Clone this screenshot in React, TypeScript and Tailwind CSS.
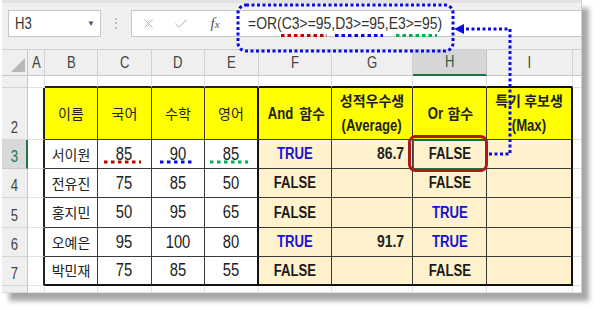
import React from "react";
import { X, Check } from "lucide-react";

const sans = "font-['Liberation_Sans','Noto_Sans_CJK_KR',sans-serif]";
const kr = "font-['Noto_Sans_CJK_KR',sans-serif] text-[14px]";

// Calibri-like narrow look: Arial squeezed sideways
const N = ({ children, className = "" }: { children: React.ReactNode; className?: string }) => (
	<span className={`inline-block scale-x-[0.82] ${className}`}>{children}</span>
);

type Row = { n: number; name: string; k: number; m: number; e: number; and: string; avg: string; or: string };

const rows: Row[] = [
	{ n: 3, name: "서이원", k: 85, m: 90, e: 85, and: "TRUE", avg: "86.7", or: "FALSE" },
	{ n: 4, name: "전유진", k: 75, m: 85, e: 50, and: "FALSE", avg: "", or: "FALSE" },
	{ n: 5, name: "홍지민", k: 50, m: 95, e: 65, and: "FALSE", avg: "", or: "TRUE" },
	{ n: 6, name: "오예은", k: 95, m: 100, e: 80, and: "TRUE", avg: "91.7", or: "TRUE" },
	{ n: 7, name: "박민재", k: 75, m: 85, e: 55, and: "FALSE", avg: "", or: "FALSE" },
];

const letters = ["A", "B", "C", "D", "E", "F", "G", "H", "I"];

const RowHead = ({ n, active }: { n?: number; active?: boolean }) => (
	<div
		className={
			active
				? "flex items-end justify-center pb-[3px] bg-[#d9d9d9] border-r-2 border-r-[#217346] border-b border-b-[#c8c8c8] text-[#217346] text-[16px] leading-none"
				: "flex items-end justify-center pb-[3px] bg-[#efefef] border-r border-r-[#c6c6c6] border-b border-b-[#d6d6d6] text-[#444] text-[16px] leading-none"
		}
	>
		{n && <N>{n}</N>}
	</div>
);

const Gap = () => <div className="bg-white border-r border-b border-[#e1e1e1]" />;

const Bool = ({ v }: { v: string }) => (
	<N className={v === "TRUE" ? "font-bold text-[16px] text-[#1414d2]" : "font-bold text-[16px] text-[#1a1a1a]"}>{v}</N>
);

const DataRow = ({ r, last }: { r: Row; last: boolean }) => {
	const b = last ? "border-b-2 border-b-[#111]" : "border-b border-b-[#3a3a3a]";
	return (
		<>
			<RowHead n={r.n} active={r.n === 3} />
			<div className="bg-white border-r-2 border-r-[#222] border-b border-b-[#e1e1e1]" />
			<div className={`${b} border-r border-r-[#3a3a3a] bg-white flex items-center justify-center`}>
				<span className={kr}>{r.name}</span>
			</div>
			<div className={`${b} border-r border-r-[#3a3a3a] bg-white flex items-center justify-center text-[18px]`}>
				<N>{r.k}</N>
			</div>
			<div className={`${b} border-r border-r-[#3a3a3a] bg-white flex items-center justify-center text-[18px]`}>
				<N>{r.m}</N>
			</div>
			<div className={`${b} border-r-2 border-r-[#111] bg-white flex items-center justify-center text-[18px]`}>
				<N>{r.e}</N>
			</div>
			<div className={`${b} border-r border-r-[#3a3a3a] bg-[#fff2cc] flex items-center justify-center`}>
				<Bool v={r.and} />
			</div>
			<div className={`${b} border-r border-r-[#3a3a3a] bg-[#fff2cc] flex items-center justify-end pr-[8px] font-bold text-[17px]`}>
				{r.avg && <N className="origin-right">{r.avg}</N>}
			</div>
			<div className={`${b} border-r border-r-[#3a3a3a] bg-[#fff2cc] flex items-center justify-center`}>
				<Bool v={r.or} />
			</div>
			<div className={`${b} border-r-2 border-r-[#111] bg-[#fff2cc]`} />
			<Gap />
		</>
	);
};

const App = () => {
	return (
		<div className={`relative w-[600px] h-[310px] bg-white text-[#222] ${sans}`}>
			<div className="ml-[2px] w-[580px] h-[293px] bg-[#efefef] border-r border-[#d0d0d0] overflow-hidden shadow-[7px_8px_5px_rgba(0,0,0,0.35)]">
				{/* formula bar */}
				<div className="h-[50px] flex items-start pt-[7px] pl-[6px] border-b border-[#d0d0d0] border-t-[3px] border-t-[#e2e2e2]">
					<div className="w-[93px] h-[27px] bg-white border border-[#c6c6c6] flex items-center justify-between pl-[6px] pr-[5px] text-[16px] text-[#333]">
						<N className="origin-left">H3</N>
						<span className="text-[8px] text-[#555]">▼</span>
					</div>
					<div className="w-[30px] h-[27px] flex items-center justify-center text-[#b4b4b4] text-[14px]">⋮</div>
					<div className="flex-1 h-[27px] bg-white border-y border-l border-[#c6c6c6] flex items-center">
						<div className="w-[32px] flex justify-center">
							<X size={15} strokeWidth={1.4} color="#a8a8a8" />
						</div>
						<div className="w-[34px] flex justify-center">
							<Check size={16} strokeWidth={1.4} color="#a8a8a8" />
						</div>
						<div className="w-[34px] flex justify-center">
							<i className="font-['Liberation_Serif',serif] text-[15px] text-[#555]">
								f<span className="text-[11px]">x</span>
							</i>
						</div>
						<span className="pl-[16px] text-[17px] text-[#333] whitespace-nowrap">
							<N className="origin-left">=OR(C3&gt;=95,D3&gt;=95,E3&gt;=95)</N>
						</span>
					</div>
				</div>

				{/* sheet */}
				<div className="grid grid-cols-[26px_17px_53px_54px_53px_54px_73px_81px_74px_86px_9px] grid-rows-[26px_12px_52px_29px_29px_30px_29px_29px_7px] bg-white">
					<div className="relative bg-[#efefef] border-r border-b border-[#c6c6c6]">
						<svg className="absolute inset-0" width="26" height="26">
							<polygon points="23,8 23,22 9,22" fill="#b9b9b9" />
						</svg>
					</div>
					{letters.map((l) => (
						<div
							key={l}
							className={
								l === "H"
									? "flex items-center justify-center bg-[#d6d6d6] border-r border-r-[#c6c6c6] border-b-2 border-b-[#217346] text-[#2a5d45] text-[16px]"
									: "flex items-center justify-center bg-[#efefef] border-r border-r-[#d2d2d2] border-b border-b-[#c6c6c6] text-[#444] text-[16px]"
							}
						>
							<N>{l}</N>
						</div>
					))}
					<div className="bg-[#efefef] border-b border-[#c6c6c6]" />

					{/* row 1 */}
					<RowHead />
					<Gap />
					<div className="bg-white border-r border-r-[#e1e1e1] border-b-2 border-b-[#222]" />
					<div className="bg-white border-r border-r-[#e1e1e1] border-b-2 border-b-[#222]" />
					<div className="bg-white border-r border-r-[#e1e1e1] border-b-2 border-b-[#222]" />
					<div className="bg-white border-r border-r-[#e1e1e1] border-b-2 border-b-[#222]" />
					<div className="bg-white border-r border-r-[#e1e1e1] border-b-2 border-b-[#111]" />
					<div className="bg-white border-r border-r-[#e1e1e1] border-b-2 border-b-[#111]" />
					<div className="bg-white border-r border-r-[#e1e1e1] border-b-2 border-b-[#111]" />
					<div className="bg-white border-r border-r-[#e1e1e1] border-b-2 border-b-[#111]" />
					<Gap />

					{/* row 2 */}
					<RowHead n={2} />
					<div className="bg-white border-r-2 border-r-[#222] border-b border-b-[#e1e1e1]" />
					<div className="bg-[#ffff00] border-r border-b border-[#3a3a3a] flex items-center justify-center">
						<span className={kr}>이름</span>
					</div>
					<div className="bg-[#ffff00] border-r border-b border-[#3a3a3a] flex items-center justify-center">
						<span className={kr}>국어</span>
					</div>
					<div className="bg-[#ffff00] border-r border-b border-[#3a3a3a] flex items-center justify-center">
						<span className={kr}>수학</span>
					</div>
					<div className="bg-[#ffff00] border-r-2 border-r-[#111] border-b border-b-[#3a3a3a] flex items-center justify-center">
						<span className={kr}>영어</span>
					</div>
					<div className="bg-[#ffff00] border-r border-b border-[#3a3a3a] flex items-center justify-center font-bold text-[16px] gap-[3px]">
						<N>And</N>
						<span className={`${kr} font-bold`}>함수</span>
					</div>
					<div className="bg-[#ffff00] border-r border-b border-[#3a3a3a] flex flex-col items-center justify-center font-bold leading-[26px] pb-[2px]">
						<span className={`${kr} font-bold`}>성적우수생</span>
						<N className="text-[16px]">(Average)</N>
					</div>
					<div className="bg-[#ffff00] border-r border-b border-[#3a3a3a] flex items-center justify-center font-bold text-[16px] gap-[3px]">
						<N>Or</N>
						<span className={`${kr} font-bold`}>함수</span>
					</div>
					<div className="bg-[#ffff00] border-r-2 border-r-[#111] border-b border-b-[#3a3a3a] flex flex-col items-center justify-center font-bold leading-[26px] pb-[2px]">
						<span className={`${kr} font-bold`}>특기 후보생</span>
						<N className="text-[16px]">(Max)</N>
					</div>
					<Gap />

					{rows.map((r, i) => (
						<DataRow key={r.n} r={r} last={i === rows.length - 1} />
					))}

					{/* row 8 */}
					<RowHead />
					{Array.from({ length: 10 }).map((_, i) => (
						<Gap key={i} />
					))}
				</div>
			</div>

			{/* annotations */}
			<svg className="absolute inset-0 pointer-events-none" width="600" height="310">
				<g fill="none" strokeWidth="3">
					<rect x="238" y="5" width="215" height="46" rx="8" stroke="#0a0ae6" strokeDasharray="3 2.5" />
					<line x1="281" y1="35.5" x2="327" y2="35.5" stroke="#c00000" strokeDasharray="3.5 3" />
					<line x1="335" y1="35.5" x2="383" y2="35.5" stroke="#0a0ae6" strokeDasharray="3.5 3" />
					<line x1="396" y1="35.5" x2="437" y2="35.5" stroke="#00b050" strokeDasharray="3.5 3" />
					<path d="M489 154 H510 V29 H463" stroke="#0a0ae6" strokeDasharray="3 2.5" />
					<line x1="104" y1="162" x2="141" y2="162" stroke="#c00000" strokeDasharray="3.5 3.5" />
					<line x1="160" y1="162" x2="193" y2="162" stroke="#0a0ae6" strokeDasharray="3.5 3.5" />
					<line x1="210" y1="162" x2="248" y2="162" stroke="#00b050" strokeDasharray="3.5 3.5" />
					<rect x="413.5" y="140.5" width="73" height="28" stroke="#217346" strokeWidth="1" />
					<rect x="409.5" y="136.5" width="77" height="34" rx="6" stroke="#b01818" />
				</g>
				<polygon points="454,29 464,24 464,34" fill="#0a0ae6" />
			</svg>
		</div>
	);
};

export default App;
